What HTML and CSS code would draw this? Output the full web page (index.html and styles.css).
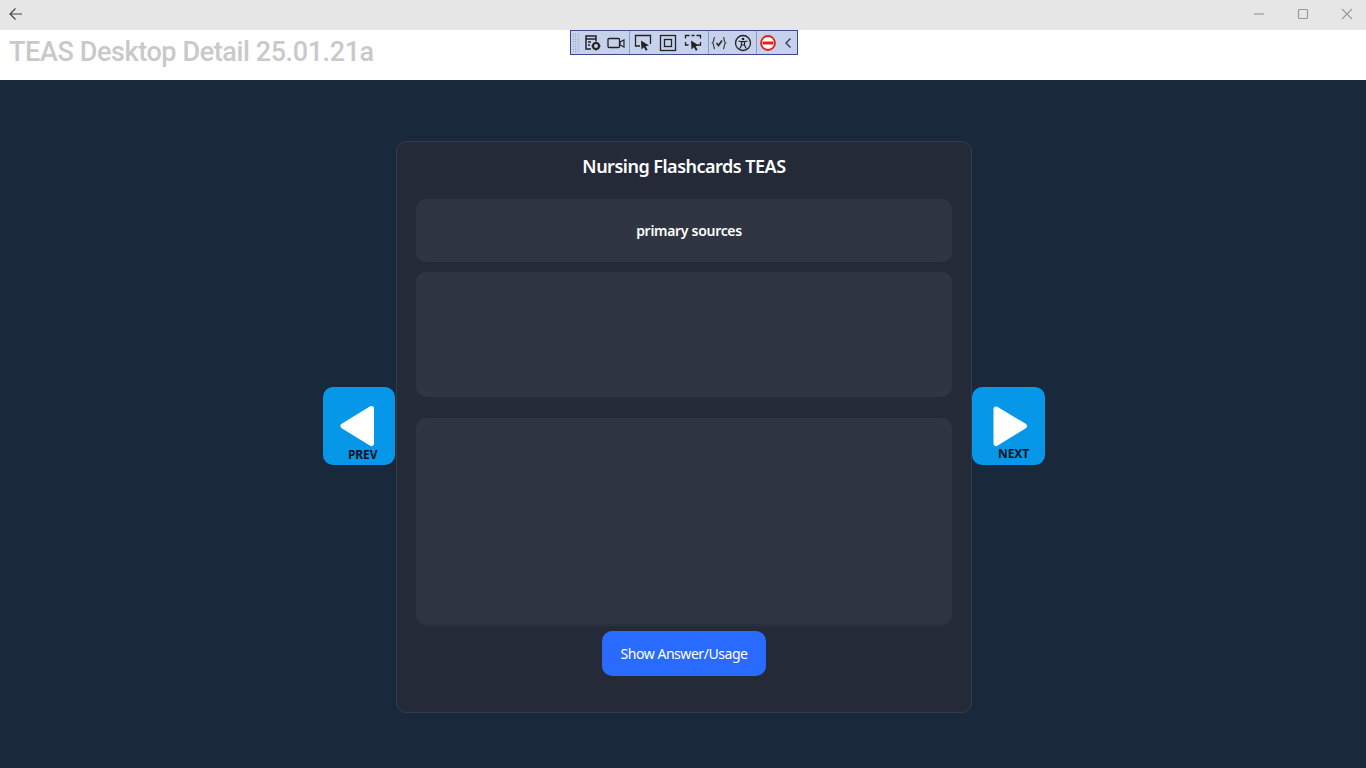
FILE: index.html
```html
<!DOCTYPE html>
<html lang="en">
<head>
<meta charset="utf-8">
<title>TEAS Desktop Detail</title>
<link rel="stylesheet" href="styles.css">
</head>
<body>
<div class="titlebar">
  <svg class="back" width="16" height="14" viewBox="0 0 16 14"><path d="M14 7H2.500M7.500 1.500 2 7l5.500 5.500" fill="none" stroke="#444" stroke-width="1.200"/></svg>
  <div class="winctl">
    <svg width="12" height="12" viewBox="0 0 12 12"><path d="M1 6h10" stroke="#999" stroke-width="1.200"/></svg>
    <svg width="12" height="12" viewBox="0 0 12 12"><rect x="1.500" y="1.500" width="9" height="9" rx="1" fill="none" stroke="#999" stroke-width="1.200"/></svg>
    <svg width="12" height="12" viewBox="0 0 12 12"><path d="M1 1l10 10M11 1 1 11" stroke="#999" stroke-width="1.100"/></svg>
  </div>
</div>
<header class="apphead"><h1>TEAS Desktop Detail 25.01.21a</h1></header>
<div class="toolbar">
  <span class="grip"></span>
  <div class="tb-group tb-a">
    <svg width="18" height="18" viewBox="0 0 18 18"><path d="M7 15H2V2h10v5M2 5h10M4 8h3M4 11h2" fill="none" stroke="#222" stroke-width="1.500"/><circle cx="12" cy="12" r="3" fill="none" stroke="#222" stroke-width="2"/><path d="M12 7.500v1.500M12 15v1.500M7.500 12H9M15 12h1.500" stroke="#222" stroke-width="1.500"/></svg>
    <svg width="18" height="18" viewBox="0 0 18 18"><rect x="1" y="4.500" width="11.500" height="9" rx="1" fill="none" stroke="#222" stroke-width="1.300"/><path d="M13 8l4-2v7l-4-2z" fill="none" stroke="#222" stroke-width="1.200"/></svg>
  </div>
  <div class="tb-group tb-b">
    <svg width="18" height="18" viewBox="0 0 18 18"><path d="M6 12H1.500V1.500h15V10" fill="none" stroke="#222" stroke-width="1.300"/><path d="M7 6.500l8 5-3.400.7 2 3.500-1.700 1-2-3.500L7.500 15.500z" fill="#222"/></svg>
    <svg width="18" height="18" viewBox="0 0 18 18"><rect x="1.500" y="1.500" width="15" height="15" fill="none" stroke="#222" stroke-width="1.300"/><rect x="5.500" y="5.500" width="7" height="7" fill="none" stroke="#222" stroke-width="1.300"/></svg>
    <svg width="18" height="18" viewBox="0 0 18 18"><path d="M5.500 1.500h-4v3M12.500 1.500h4v3M1.500 8v3h3M16.500 8v3h-3M7.500 1.500h3" fill="none" stroke="#222" stroke-width="1.300"/><path d="M7 6.500l8 5-3.400.7 2 3.500-1.700 1-2-3.500L7.500 15.500z" fill="#222"/></svg>
  </div>
  <div class="tb-group tb-c">
    <svg width="18" height="18" viewBox="0 0 18 18"><path d="M5 3.500C3 3.500 4.500 8 2.500 9c2 1 .5 5.500 2.500 5.500M13 3.500C15 3.500 13.500 8 15.500 9c-2 1-.5 5.500-2.500 5.500" fill="none" stroke="#444" stroke-width="1.300"/><path d="M6.500 9l2 2.500 3.500-5" fill="none" stroke="#333" stroke-width="1.800"/></svg>
    <svg width="18" height="18" viewBox="0 0 18 18"><circle cx="9" cy="9" r="7.500" fill="none" stroke="#222" stroke-width="1.300"/><circle cx="9" cy="5" r="1.300" fill="#222"/><path d="M4.500 7l3 .7V11l-1.500 3.500M13.500 7l-3 .7V11l1.500 3.500M7.500 7.700h3M7.500 11h3" fill="none" stroke="#222" stroke-width="1.200"/></svg>
  </div>
  <div class="tb-group tb-d">
    <svg width="18" height="18" viewBox="0 0 18 18"><circle cx="9" cy="9" r="7" fill="#fff" stroke="#e2231a" stroke-width="1.800"/><rect x="3.500" y="7.500" width="11" height="3" fill="#e2231a"/></svg>
    <svg width="12" height="18" viewBox="0 0 12 18"><path d="M8.500 4.500 4 9l4.500 4.500" fill="none" stroke="#445" stroke-width="1.500"/></svg>
  </div>
</div>
<main class="stage">
  <button class="nav nav-prev" type="button">
    <svg class="tri" width="38" height="46" viewBox="0 0 38 46"><path d="M33.500 5.500 5 23l28.500 17.500z" fill="#fff" stroke="#fff" stroke-width="5" stroke-linejoin="round"/></svg>
    <span class="navlabel">PREV</span>
  </button>
  <section class="card">
    <h2>Nursing Flashcards TEAS</h2>
    <div class="panel panel-term">primary sources</div>
    <div class="panel panel-mid"></div>
    <div class="panel panel-big"></div>
    <button class="show" type="button">Show Answer/Usage</button>
  </section>
  <button class="nav nav-next" type="button">
    <svg class="tri" width="38" height="46" viewBox="0 0 38 46"><path d="M4 5l28.500 17L4 39.500z" fill="#fff" stroke="#fff" stroke-width="5" stroke-linejoin="round"/></svg>
    <span class="navlabel">NEXT</span>
  </button>
</main>
</body>
</html>
```
FILE: styles.css
```css
* { box-sizing: border-box; }
html, body { margin: 0; height: 100%; overflow: hidden; }
body { display: flex; flex-direction: column; background: #19283a; font-family: "Noto Sans", "Open Sans", sans-serif; position: relative; }
.titlebar { height: 30px; flex: none; background: #e6e6e6; display: flex; align-items: center; justify-content: space-between; padding: 0 13px 0 8px; }
.back { display: block; margin-bottom: 3px; }
.winctl { display: flex; gap: 32px; margin-bottom: 3px; }
.winctl svg { display: block; }
.apphead { height: 50px; flex: none; background: #fff; padding: 0 9px; }
.apphead h1 { margin: 0; font: 500 27px/44px Roboto, "Open Sans", sans-serif; letter-spacing: -0.4px; color: #c9c9c9; white-space: nowrap; }
.toolbar { position: absolute; left: 570px; top: 30px; width: 228px; height: 25px; background: #c6d2ec; border: 1px solid #3b4a8c; display: flex; align-items: center; padding-left: 1px; }
.toolbar svg { flex: none; display: block; }
.grip { width: 8px; height: 19px; flex: none; margin-right: 4px; background-image: radial-gradient(#7a83a0 40%, transparent 45%); background-size: 2.500px 2.500px; }
.tb-group { display: flex; align-items: center; height: 23px; flex: none; }
.tb-group + .tb-group { border-left: 1px solid #8d9cc4; }
.tb-a { gap: 5px; padding-right: 4px; }
.tb-b { gap: 7px; padding: 0 6px 0 4px; }
.tb-c { gap: 6px; padding: 0 4px 0 1px; }
.tb-d { gap: 5px; padding-left: 2px; }
.stage { flex: 1; display: flex; align-items: flex-start; justify-content: center; padding: 61px 0 0 2px; }
.nav { width: 72px; height: 78px; flex: none; margin-top: 246px; padding: 0; border: 0; border-radius: 10px; background: #0797e8; position: relative; }
.nav-next { width: 73px; }
.tri { position: absolute; left: 15px; top: 16px; }
.nav-next .tri { left: 20px; top: 17px; }
.navlabel { position: absolute; left: 25px; top: 59px; font: 700 12px/16px "Noto Sans", sans-serif; letter-spacing: -0.1px; color: #0b1420; }
.nav-prev .navlabel { top: 60px; }
.nav-next .navlabel { left: 26px; }
.card { width: 576px; height: 572px; flex: none; margin-left: 1px; background: #252a39; border: 1px solid #323c4c; border-radius: 10px; padding: 0 19px; display: flex; flex-direction: column; }
.card h2 { margin: 10px 0 19px; height: 28px; font: 600 18px/28px "Noto Sans", sans-serif; letter-spacing: -0.5px; color: #fff; text-align: center; }
.panel { background: #303542; border-radius: 10px; flex: none; }
.panel-term { height: 63px; display: flex; align-items: center; justify-content: center; padding-left: 10px; font-weight: 600; font-size: 14px; letter-spacing: -0.3px; color: #fff; }
.panel-mid { height: 125px; margin-top: 10px; }
.panel-big { height: 206px; margin-top: 21px; box-shadow: 0 1px 0 #292e3c, 0 2px 0 #2c3140; }
.show { align-self: center; width: 164px; height: 45px; margin-top: 7px; border: 0; border-radius: 10px; background: #2a6bff; color: #fff; font: 400 14px/20px "Noto Sans", sans-serif; letter-spacing: -0.45px; }
```
